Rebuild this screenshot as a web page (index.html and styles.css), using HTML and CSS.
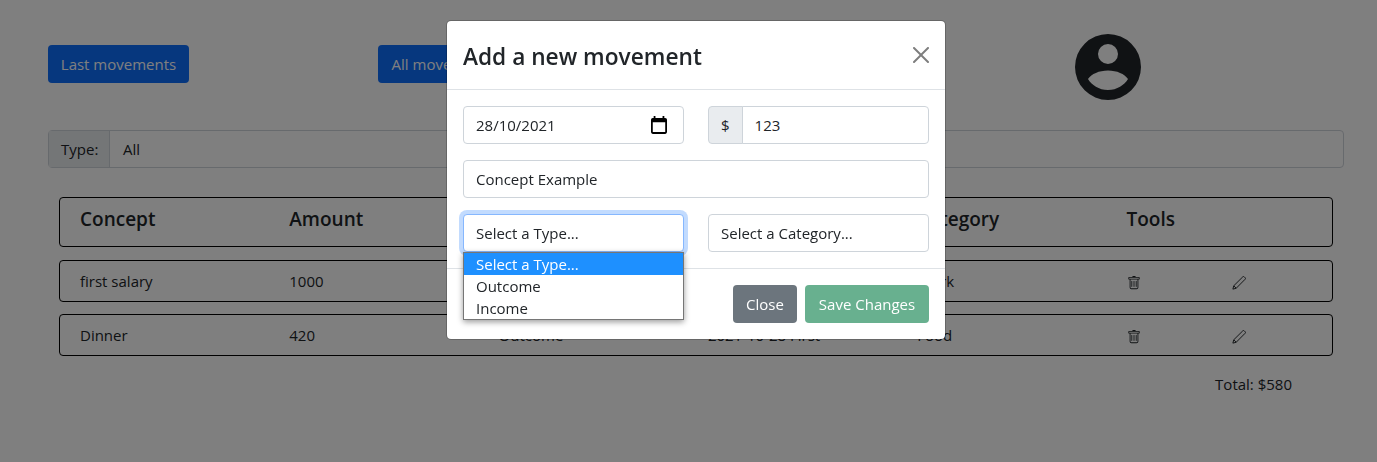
FILE: index.html
```html
<!DOCTYPE html>
<html>
	<head>
		<meta charset="UTF-8">
		<title>Movements</title>
		<link rel="stylesheet" href="styles.css">
	</head>
	<body>
		<div class="page">
			<div class="top">
				<button class="btn btn-blue btn-last">Last movements</button>
				<button class="btn btn-blue btn-all">All movements</button>
				<svg class="avatar" viewBox="0 0 66 66" fill="#212529">
					<path fill-rule="evenodd" d="M33 0a33 33 0 1 1 0 66a33 33 0 1 1 0-66zM33 10a10 10 0 1 0 0 20a10 10 0 1 0 0-20zM33 36.500c-9 0-16.500 3.500-20 8.500c3.500 6 11 11 20 11s16.500-5 20-11c-3.500-5-11-8.500-20-8.500z"/>
				</svg>
			</div>
			<div class="filter">
				<span class="filter-label">Type:</span>
				<span class="filter-value">All</span>
			</div>
			<div class="row row-head">
				<span>Concept</span><span>Amount</span><span>Type</span><span>Date</span><span>Category</span><span>Tools</span>
			</div>
			<div class="row">
				<span>first salary</span><span>1000</span><span>Income</span><span>2021-10-28 First</span><span>Work</span>
				<span class="tools">
					<svg class="ico" viewBox="0 0 16 16" fill="#212529"><path d="M5.5 5.500A.5.5 0 0 1 6 6v6a.5.5 0 0 1-1 0V6a.5.5 0 0 1 .5-.5zm2.500 0a.5.5 0 0 1 .5.5v6a.5.5 0 0 1-1 0V6a.5.5 0 0 1 .5-.5zm3 .5a.5.5 0 0 0-1 0v6a.5.5 0 0 0 1 0V6z"/><path fill-rule="evenodd" d="M14.500 3a1 1 0 0 1-1 1H13v9a2 2 0 0 1-2 2H5a2 2 0 0 1-2-2V4h-.5a1 1 0 0 1-1-1V2a1 1 0 0 1 1-1H6a1 1 0 0 1 1-1h2a1 1 0 0 1 1 1h3.500a1 1 0 0 1 1 1v1zM4.118 4 4 4.059V13a1 1 0 0 0 1 1h6a1 1 0 0 0 1-1V4.059L11.882 4H4.118zM2.500 3V2h11v1h-11z"/></svg>
					<svg class="ico" viewBox="0 0 16 16" fill="none" stroke="#212529" stroke-width="1.100"><path d="M1 15l1-3.800L12.300 1a1.200 1.200 0 0 1 1.700 0l1 1a1.200 1.200 0 0 1 0 1.700L4.800 14zM2 11.200L4.800 14"/></svg>
				</span>
			</div>
			<div class="row">
				<span>Dinner</span><span>420</span><span>Outcome</span><span>2021-10-28 First</span><span>Food</span>
				<span class="tools">
					<svg class="ico" viewBox="0 0 16 16" fill="#212529"><path d="M5.5 5.500A.5.5 0 0 1 6 6v6a.5.5 0 0 1-1 0V6a.5.5 0 0 1 .5-.5zm2.500 0a.5.5 0 0 1 .5.5v6a.5.5 0 0 1-1 0V6a.5.5 0 0 1 .5-.5zm3 .5a.5.5 0 0 0-1 0v6a.5.5 0 0 0 1 0V6z"/><path fill-rule="evenodd" d="M14.500 3a1 1 0 0 1-1 1H13v9a2 2 0 0 1-2 2H5a2 2 0 0 1-2-2V4h-.5a1 1 0 0 1-1-1V2a1 1 0 0 1 1-1H6a1 1 0 0 1 1-1h2a1 1 0 0 1 1 1h3.500a1 1 0 0 1 1 1v1zM4.118 4 4 4.059V13a1 1 0 0 0 1 1h6a1 1 0 0 0 1-1V4.059L11.882 4H4.118zM2.500 3V2h11v1h-11z"/></svg>
					<svg class="ico" viewBox="0 0 16 16" fill="none" stroke="#212529" stroke-width="1.100"><path d="M1 15l1-3.800L12.300 1a1.200 1.200 0 0 1 1.700 0l1 1a1.200 1.200 0 0 1 0 1.700L4.800 14zM2 11.200L4.800 14"/></svg>
				</span>
			</div>
			<div class="total">Total: $580</div>
		</div>

		<div class="backdrop"></div>
		<div class="modal">
			<div class="modal-header">
				<h5>Add a new movement</h5>
				<svg class="close" viewBox="0 0 16 16" fill="#000"><path d="M.293.293a1 1 0 0 1 1.414 0L8 6.586 14.293.293a1 1 0 1 1 1.414 1.414L9.414 8l6.293 6.293a1 1 0 0 1-1.414 1.414L8 9.414l-6.293 6.293a1 1 0 0 1-1.414-1.414L6.586 8 .293 1.707a1 1 0 0 1 0-1.414z"/></svg>
			</div>
			<div class="modal-body">
				<div class="form-row">
					<div class="field date-field">
						<span>28/10/2021</span>
						<svg class="cal" viewBox="3 1 18 20" fill="#000"><path d="M19 3h-1V1h-2v2H8V1H6v2H5a2 2 0 0 0-2 2v14a2 2 0 0 0 2 2h14a2 2 0 0 0 2-2V5a2 2 0 0 0-2-2zm0 16H5V8h14v11z"/></svg>
					</div>
					<div class="amount-group">
						<span class="addon">$</span>
						<input class="field amount" type="text" value="123">
					</div>
				</div>
				<input class="field" type="text" value="Concept Example">
				<div class="form-row">
					<div class="select-wrap">
						<div class="field focused">Select a Type...</div>
						<ul class="options">
							<li class="selected">Select a Type...</li>
							<li>Outcome</li>
							<li>Income</li>
						</ul>
					</div>
					<div class="field">Select a Category...</div>
				</div>
			</div>
			<div class="modal-footer">
				<button class="btn btn-grey">Close</button>
				<button class="btn btn-green">Save Changes</button>
			</div>
		</div>
	</body>
</html>
```

FILE: styles.css
```css
*{
	box-sizing:border-box;
}
body{
	margin:0;
	height:462px;
	overflow:hidden;
	background-color:#fff;
	color:#212529;
	font-family:"Open Sans","Noto Sans",sans-serif;
	font-size:15px;
	line-height:24px;
}
.page{
	padding:34px 33px 0 48px;
}
.top{
	display:flex;
	align-items:flex-start;
	height:66px;
}
.btn{
	border:1px solid transparent;
	border-radius:4px;
	height:38px;
	padding:0;
	font:inherit;
	color:#fff;
	white-space:nowrap;
}
.btn-blue{
	background-color:#0d6efd;
	margin-top:11px;
}
.btn-last{
	width:141px;
	margin-right:189px;
}
.btn-all{
	width:131px;
	margin-right:566px;
}
.avatar{
	width:66px;
	height:66px;
}
.filter{
	display:flex;
	height:38px;
	margin-top:30px;
	border:1px solid #ced4da;
	border-radius:4px;
}
.filter-label{
	width:61px;
	padding:6px 12px;
	background-color:#e9ecef;
	border-right:1px solid #ced4da;
}
.filter-value{
	padding:6px 13px;
}
.row{
	display:grid;
	grid-template-columns:repeat(5,209.3px) 1fr;
	align-items:center;
	height:42px;
	margin:12px 11px 0;
	padding:0 20px;
	border:1px solid #000;
	border-radius:4px;
}
.row-head{
	height:50px;
	margin-top:29px;
	margin-bottom:13px;
	padding-bottom:6px;
	font-size:19px;
	font-weight:600;
}
.tools{
	display:flex;
	gap:91px;
	padding-top:3px;
	padding-left:1px;
}
.ico{
	width:14px;
	height:14px;
}
.total{
	margin-top:16px;
	margin-right:52px;
	text-align:right;
}
.backdrop{
	position:fixed;
	top:0;
	left:0;
	width:100%;
	height:100%;
	background-color:#000;
	opacity:.5;
}
.modal{
	position:fixed;
	top:20px;
	left:446px;
	width:500px;
	height:320px;
	background-color:#fff;
	border:1px solid rgba(0,0,0,.2);
	border-radius:5px;
	background-clip:padding-box;
}
.modal-header{
	display:flex;
	justify-content:space-between;
	align-items:center;
	height:69px;
	padding:0 16px;
	border-bottom:1px solid #dee2e6;
}
.modal-header h5{
	margin:4px 0 0;
	font-size:22.7px;
	font-weight:600;
}
.close{
	width:16px;
	height:16px;
	margin-top:-1px;
	opacity:.5;
}
.modal-body{
	display:flex;
	flex-direction:column;
	gap:16px;
	height:179px;
	padding:16px;
	border-bottom:1px solid #dee2e6;
}
.form-row{
	display:grid;
	grid-template-columns:221px 221px;
	justify-content:space-between;
}
.field{
	display:block;
	width:100%;
	height:38px;
	padding:6px 12px;
	border:1px solid #ced4da;
	border-radius:4px;
	background-color:#fff;
	font:inherit;
	color:#212529;
}
.date-field{
	display:flex;
	justify-content:space-between;
	align-items:center;
	padding-right:16px;
}
.cal{
	width:16px;
	height:18px;
}
.amount-group{
	display:flex;
}
.addon{
	width:35px;
	padding:6px 12px;
	background-color:#e9ecef;
	border:1px solid #ced4da;
	border-radius:4px 0 0 4px;
}
.amount{
	margin-left:-1px;
	border-radius:0 4px 4px 0;
}
.select-wrap{
	position:relative;
}
.focused{
	border-color:#86b7fe;
	box-shadow:0 0 0 4px rgba(13,110,253,.25);
}
.options{
	position:absolute;
	top:38px;
	left:0;
	width:100%;
	height:68px;
	margin:0;
	padding:0;
	list-style:none;
	background-color:#fff;
	border:1px solid #767676;
	box-shadow:0 2px 6px rgba(0,0,0,.4);
}
.options li{
	height:22px;
	padding:0 12px;
	line-height:22px;
}
.options .selected{
	background-color:#1e90ff;
	color:#fff;
}
.modal-footer{
	display:flex;
	justify-content:flex-end;
	gap:8px;
	padding:16px;
}
.btn-grey{
	width:64px;
	background-color:#6c757d;
}
.btn-green{
	width:124px;
	background-color:#198754;
	opacity:.65;
}
```
